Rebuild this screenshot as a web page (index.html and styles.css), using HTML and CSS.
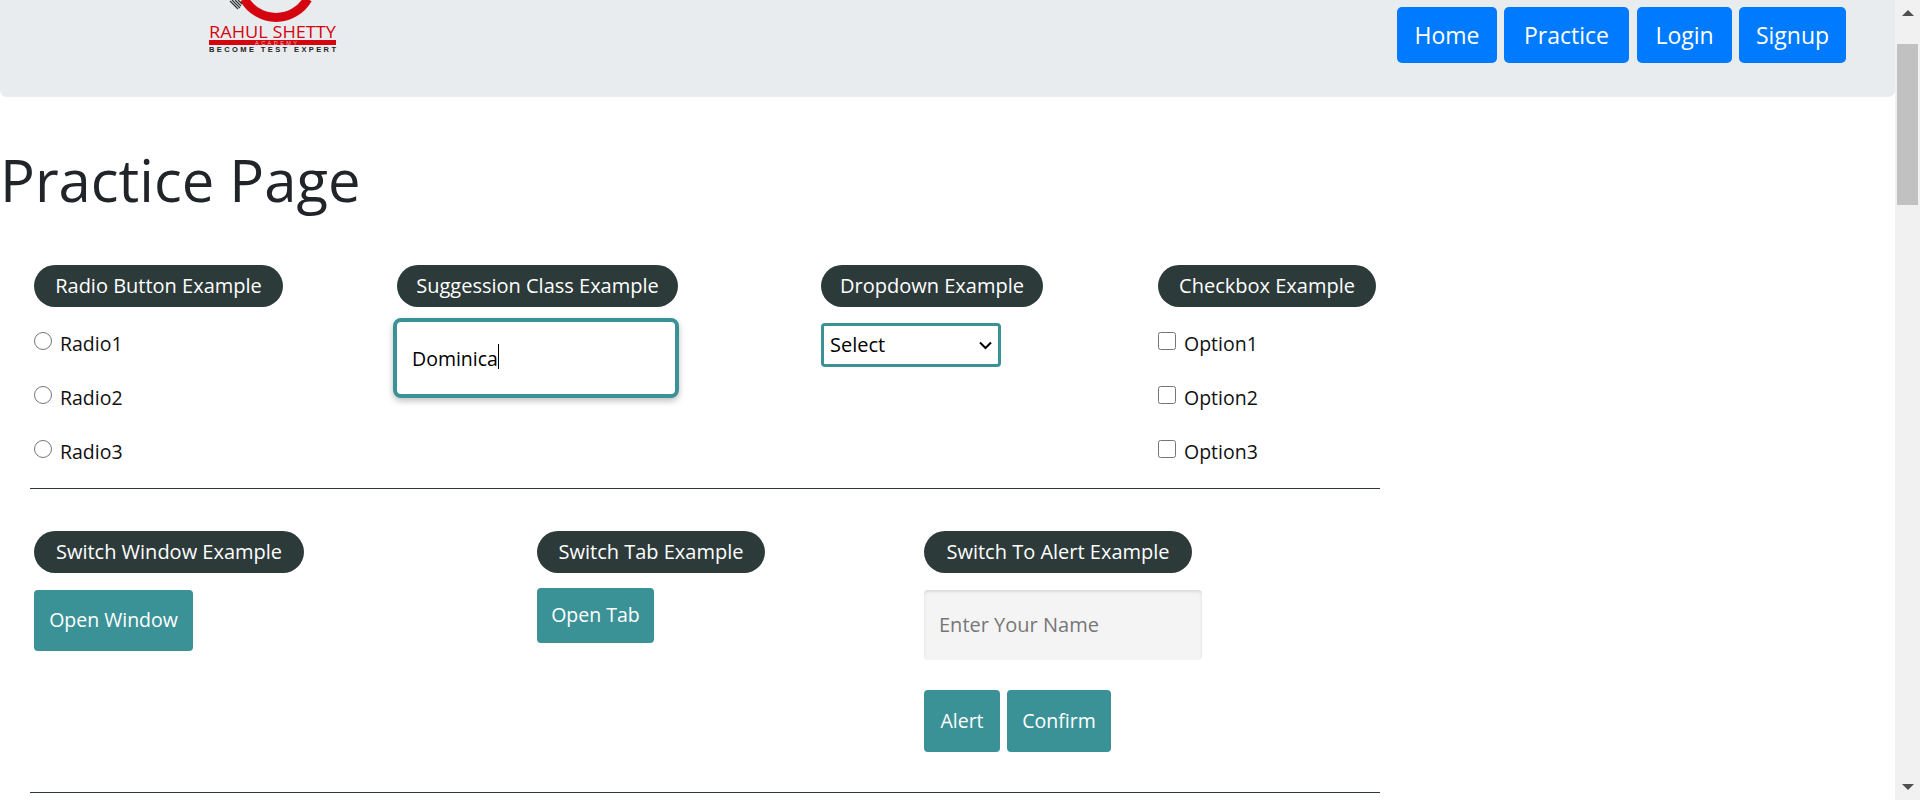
FILE: index.html
```html
<!DOCTYPE html>
<html lang="en">
<head>
<meta charset="utf-8">
<title>Practice Page</title>
<link rel="stylesheet" href="styles.css">
</head>
<body>
<div class="window">
  <main class="page">
    <header class="topbar">
      <svg class="logo" width="130" height="54" viewBox="0 0 130 54" aria-label="Rahul Shetty Academy">
        <path class="arc" d="M35.300 -1 A36.500 36.500 0 0 0 98.700 -1"/>
        <path class="hatch" d="M21 1 L29 9 M23 0 L31 8 M26 0 L32 6 M29 0 L33 4"/>
        <text class="logo-name" x="0" y="38" textLength="127" lengthAdjust="spacingAndGlyphs">RAHUL SHETTY</text>
        <rect class="logo-bar" x="0" y="40" width="127" height="5"/>
        <text class="logo-academy" x="46" y="45" textLength="42" lengthAdjust="spacing">ACADEMY</text>
        <text class="logo-tag" x="0" y="52" textLength="127" lengthAdjust="spacing">BECOME TEST EXPERT</text>
      </svg>
      <nav class="nav">
        <a class="nav-btn nav-home">Home</a>
        <a class="nav-btn nav-practice">Practice</a>
        <a class="nav-btn nav-login">Login</a>
        <a class="nav-btn nav-signup">Signup</a>
      </nav>
    </header>
    <h1 class="title">Practice Page</h1>
    <section class="content">
      <div class="row row-one">
        <div class="col">
          <div class="pill pill-radio">Radio Button Example</div>
          <label class="opt"><input type="radio" name="r"><span>Radio1</span></label>
          <label class="opt"><input type="radio" name="r"><span>Radio2</span></label>
          <label class="opt"><input type="radio" name="r"><span>Radio3</span></label>
        </div>
        <div class="col">
          <div class="pill pill-suggest">Suggession Class Example</div>
          <div class="suggest-wrap">
            <input class="suggest" type="text" value="Dominica">
            <span class="caret"></span>
          </div>
        </div>
        <div class="col">
          <div class="pill pill-drop">Dropdown Example</div>
          <select class="drop"><option>Select</option><option>Option1</option><option>Option2</option><option>Option3</option></select>
        </div>
        <div class="col">
          <div class="pill pill-check">Checkbox Example</div>
          <label class="opt"><input type="checkbox"><span>Option1</span></label>
          <label class="opt"><input type="checkbox"><span>Option2</span></label>
          <label class="opt"><input type="checkbox"><span>Option3</span></label>
        </div>
      </div>
      <hr class="rule rule-one">
      <div class="row row-two">
        <div class="col">
          <div class="pill pill-window">Switch Window Example</div>
          <button class="btn btn-window">Open Window</button>
        </div>
        <div class="col">
          <div class="pill pill-tab">Switch Tab Example</div>
          <button class="btn btn-tab">Open Tab</button>
        </div>
        <div class="col">
          <div class="pill pill-alert">Switch To Alert Example</div>
          <input class="name" type="text" placeholder="Enter Your Name">
          <div class="actions">
            <button class="btn btn-alert">Alert</button>
            <button class="btn btn-confirm">Confirm</button>
          </div>
        </div>
      </div>
      <hr class="rule rule-two">
    </section>
  </main>
  <aside class="scrollbar">
    <div class="arrow arrow-up"></div>
    <div class="track"><div class="thumb"></div></div>
    <div class="arrow arrow-down"></div>
  </aside>
</div>
</body>
</html>
```
FILE: styles.css
```css
* { box-sizing: border-box; }
html, body { margin: 0; height: 800px; overflow: hidden; background: #fff; }
body { font-family: "Open Sans", Lato, sans-serif; color: #000; }
.window { display: flex; height: 800px; }
.page { flex: 1; min-width: 0; overflow: hidden; }

.topbar {
  height: 97px;
  background: #e9ecef;
  border-radius: 0 0 7px 7px;
  display: flex;
  justify-content: space-between;
  align-items: flex-start;
  padding: 0 49px 0 209px;
}
.logo { display: block; overflow: hidden; }
.logo .arc { fill: none; stroke: #d40511; stroke-width: 9; }
.logo .hatch { fill: none; stroke: #333; stroke-width: 1.200; }
.logo-name { font: 500 16.500px "Open Sans", sans-serif; fill: #d40511; }
.logo-bar { fill: #d40511; }
.logo-academy { font: 400 5.500px "Liberation Sans", sans-serif; fill: #f7b9bc; }
.logo-tag { font: 700 7.500px "Liberation Sans", sans-serif; fill: #222; }

.nav { display: flex; gap: 7px; padding-top: 7px; }
.nav-btn {
  height: 56px;
  display: flex;
  align-items: center;
  justify-content: center;
  background: #007bff;
  color: #fff;
  border-radius: 5px;
  font-size: 23px;
}
.nav-home { width: 100px; }
.nav-practice { width: 125px; margin-right: 1px; }
.nav-login { width: 95px; }
.nav-signup { width: 107px; }

.title {
  margin: 47px 0 0;
  height: 121px;
  font-size: 58px;
  line-height: 72px;
  font-weight: 400;
  color: #212529;
}

.content { padding-left: 30px; width: 1380px; }
.row { display: grid; padding-left: 4px; }
.row-one { grid-template-columns: 363px 424px 337px 1fr; height: 223px; }
.row-two { grid-template-columns: 503px 387px 1fr; height: 261px; }
.col { display: flex; flex-direction: column; align-items: flex-start; }

.pill {
  height: 42px;
  display: flex;
  align-items: center;
  justify-content: center;
  background: #2d3a3a;
  color: #fff;
  border-radius: 21px;
  font-size: 20px;
  font-weight: 500;
  padding-bottom: 2px;
}
.pill-radio { width: 249px; }
.pill-suggest { width: 281px; }
.pill-drop { width: 222px; }
.pill-check { width: 218px; }
.pill-window { width: 270px; }
.pill-tab { width: 228px; }
.pill-alert { width: 268px; }

.opt {
  display: flex;
  align-items: center;
  gap: 8px;
  height: 54px;
  font-size: 19.500px;
  color: #111;
}
.row-one .col .pill + .opt { margin-top: 9px; }
.opt input { width: 18px; height: 18px; margin: -5px 0 0 0; flex: none; }
.opt span { display: block; }

.suggest-wrap { position: relative; margin: 11px 0 0 -4px; }
.suggest {
  display: block;
  width: 286px;
  height: 80px;
  padding: 0 15px;
  border: 4px solid #3a9297;
  border-radius: 8px;
  box-shadow: 0 3px 6px rgba(0, 0, 0, 0.25);
  outline: none;
  font: 400 19.500px "Open Sans", sans-serif;
  color: #000;
  background: #fff;
}
.caret {
  position: absolute;
  left: 105px;
  top: 26px;
  width: 1px;
  height: 25px;
  background: #000;
}
.drop {
  width: 180px;
  height: 44px;
  margin-top: 16px;
  padding: 0 6px 2px;
  border: 3px solid #3a9297;
  border-radius: 4px;
  appearance: none;
  background: #fff url("data:image/svg+xml,%3Csvg xmlns='http://www.w3.org/2000/svg' width='15' height='9' viewBox='0 0 15 9'%3E%3Cpath d='M2 1.500l5.500 5.500 5.500-5.500' fill='none' stroke='%23000' stroke-width='2'/%3E%3C/svg%3E") no-repeat right 5px center;
  font: 400 20px "Open Sans", sans-serif;
  color: #000;
  outline: none;
}

.rule { border: 0; border-top: 1px solid #2d3a3a; margin: 0; }
.rule-one { margin-bottom: 42px; }

.btn {
  display: block;
  border: 0;
  background: #3a9297;
  color: #fff;
  border-radius: 4px;
  font: 500 19.500px "Open Sans", sans-serif;
  padding: 0 0 2px;
}
.btn-window { width: 159px; height: 61px; margin-top: 17px; }
.btn-tab { width: 117px; height: 55px; margin-top: 15px; }
.name {
  display: block;
  width: 278px;
  height: 70px;
  margin-top: 17px;
  padding: 0 15px 2px;
  border: 0;
  border-radius: 4px;
  background: #f4f4f4;
  box-shadow: inset 0 2px 3px rgba(0, 0, 0, 0.1);
  outline: none;
  font: 400 20px "Open Sans", sans-serif;
}
.name::placeholder { color: #777; opacity: 1; }
.actions { display: flex; gap: 7px; margin-top: 30px; }
.btn-alert { width: 76px; height: 62px; }
.btn-confirm { width: 104px; height: 62px; }

.scrollbar {
  flex: none;
  width: 25px;
  background: #f1f1f1;
  display: flex;
  flex-direction: column;
  align-items: center;
}
.arrow { flex: none; width: 0; height: 0; border-left: 6px solid transparent; border-right: 6px solid transparent; }
.arrow-up { margin-top: 10px; border-bottom: 6px solid #505050; }
.arrow-down { margin-bottom: 10px; border-top: 6px solid #505050; }
.track { flex: 1; width: 100%; padding: 28px 2px 0; }
.thumb { height: 161px; background: #c1c1c1; }
```
